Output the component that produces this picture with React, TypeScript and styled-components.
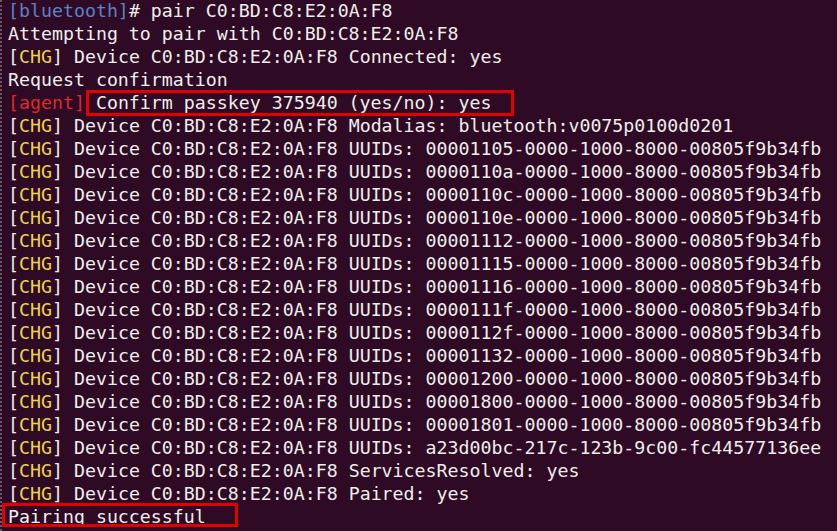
import React from "react";
import styled, { createGlobalStyle } from "styled-components";

const Global = createGlobalStyle`
  html, body { margin: 0; padding: 0; background: #300a24; }
  body { width: 837px; height: 531px; overflow: hidden; }
`;

const Terminal = styled.div`
  box-sizing: border-box;
  width: 837px;
  height: 531px;
  background: #2f0a24;
  border-left: 2px dotted #6a5a64;
  padding: 0 0 0 6px;
  overflow: hidden;
`;

const Output = styled.pre`
  margin: -1px 0 0 0;
  font-family: "DejaVu Sans Mono", monospace;
  font-size: 18.25px;
  line-height: 23px;
  color: #eeeeec;
  white-space: pre;
`;

const Line = styled.div`
  height: 23px;
`;

const Tag = styled.span<{ $tone: "blue" | "yellow" | "red" }>`
  color: ${(p) =>
    p.$tone === "blue" ? "#5d80c6" : p.$tone === "yellow" ? "#e9d54c" : "#dc2a2a"};
`;

const Highlight = styled.span<{ $l: number; $r: number; $t: number; $b: number }>`
  position: relative;
  display: inline-block;
  height: 23px;
  vertical-align: top;
  &::after {
    content: "";
    position: absolute;
    left: ${(p) => p.$l}px;
    right: ${(p) => p.$r}px;
    top: ${(p) => p.$t}px;
    bottom: ${(p) => p.$b}px;
    border: 3px solid #e40000;
    pointer-events: none;
  }
`;

const MAC = "C0:BD:C8:E2:0A:F8";
const uuids = [
  "00001105-0000-1000-8000-00805f9b34fb",
  "0000110a-0000-1000-8000-00805f9b34fb",
  "0000110c-0000-1000-8000-00805f9b34fb",
  "0000110e-0000-1000-8000-00805f9b34fb",
  "00001112-0000-1000-8000-00805f9b34fb",
  "00001115-0000-1000-8000-00805f9b34fb",
  "00001116-0000-1000-8000-00805f9b34fb",
  "0000111f-0000-1000-8000-00805f9b34fb",
  "0000112f-0000-1000-8000-00805f9b34fb",
  "00001132-0000-1000-8000-00805f9b34fb",
  "00001200-0000-1000-8000-00805f9b34fb",
  "00001800-0000-1000-8000-00805f9b34fb",
  "00001801-0000-1000-8000-00805f9b34fb",
  "a23d00bc-217c-123b-9c00-fc44577136ee",
];

const Chg: React.FC<{ text: string }> = ({ text }) => (
  <Line>
    [<Tag $tone="yellow">CHG</Tag>] Device {MAC} {text}
  </Line>
);

export default function App() {
  return (
    <>
      <Global />
      <Terminal>
        <Output>
          <Line>
            <Tag $tone="blue">[bluetooth]</Tag># pair {MAC}
          </Line>
          <Line>Attempting to pair with {MAC}</Line>
          <Chg text="Connected: yes" />
          <Line>Request confirmation</Line>
          <Line>
            <Tag $tone="red">[agent]</Tag>
            <Highlight $l={1} $r={-23} $t={-1} $b={-2}>
              {" Confirm passkey 375940 (yes/no): yes"}
            </Highlight>
          </Line>
          <Chg text="Modalias: bluetooth:v0075p0100d0201" />
          {uuids.map((u) => (
            <Chg key={u} text={`UUIDs: ${u}`} />
          ))}
          <Chg text="ServicesResolved: yes" />
          <Chg text="Paired: yes" />
          <Line>
            <Highlight $l={-6} $r={-32} $t={-2} $b={1}>
              Pairing successful
            </Highlight>
          </Line>
        </Output>
      </Terminal>
    </>
  );
}
